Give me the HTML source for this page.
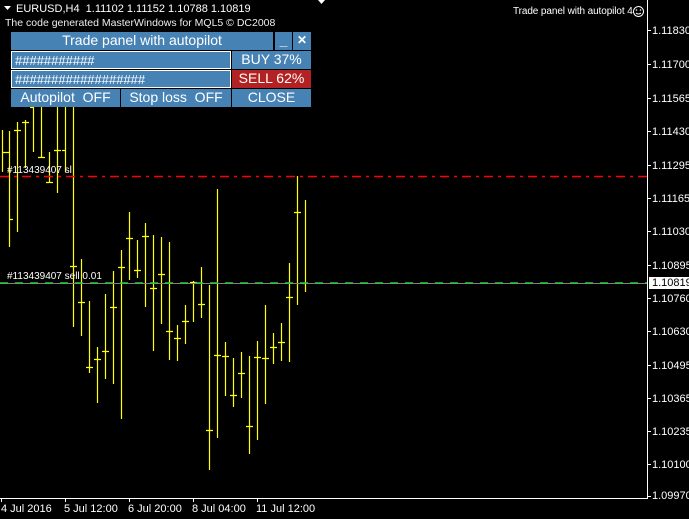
<!DOCTYPE html>
<html><head><meta charset="utf-8"><style>
html,body{margin:0;padding:0;background:#000;width:689px;height:519px;overflow:hidden;font-family:"Liberation Sans",sans-serif}
.abs{position:absolute}
.t{position:absolute;color:#fff;font-size:11px;white-space:nowrap;line-height:12px}
.b{position:absolute;background:#4682B4;color:#fff;font-size:14px;text-align:center;box-sizing:border-box;line-height:17px;white-space:nowrap}
.in{border:1px solid #fff;text-align:left;padding-left:3px;font-size:13px}
</style></head><body>
<svg class="abs" style="left:0;top:0" width="689" height="519">
<g stroke="#ffff00" stroke-width="1.2" fill="none">
<path d="M2.5 130V172M9.5 131V247M17.5 122V232M25.5 120V168M33.5 100V152M41.5 100V158M49.5 152V183M57.5 100V193M65.5 100V172M73.5 100V327M81.5 259V336M89.5 301V373M97.5 347V403M105.5 294V379M113.5 271V384M121.5 250V419M129.5 212V280M137.5 240V278M145.5 223V307M153.5 235V351M161.5 237V324M169.5 242V360M177.5 325V361M185.5 305V344M193.5 281V322M201.5 267V318M209.5 285V470M217.5 189V438M225.5 342V396M233.5 358V407M241.5 352V398M249.5 356V454M257.5 341V440M265.5 305V404M273.5 333V364M281.5 323V361M289.5 263V362M297.5 176V305M305.5 200V292"/>
<path d="M3 152.5H6M6 152.5H9M10 219.5H13M14 130.5H17M18 130.5H21M22 122.5H25M26 122.5H29M30 107.5H33M38 157.5H41M42 157.5H45M46 182.5H49M50 182.5H53M54 150.5H57M58 150.5H61M62 150.5H65M70 266.5H73M74 266.5H77M78 302.5H81M82 302.5H85M86 367.5H89M90 367.5H93M94 359.5H97M98 359.5H101M102 351.5H105M106 351.5H109M110 307.5H113M114 307.5H117M118 267.5H121M122 267.5H125M126 238.5H129M130 238.5H133M134 270.5H137M138 270.5H141M142 236.5H145M146 236.5H149M150 288.5H153M154 288.5H157M158 274.5H161M162 274.5H165M166 331.5H169M170 331.5H173M174 338.5H177M178 338.5H181M182 321.5H185M186 321.5H189M190 282.5H193M194 282.5H197M198 304.5H201M202 304.5H205M206 430.5H209M210 430.5H213M214 355.5H217M218 355.5H221M222 356.5H225M226 356.5H229M230 395.5H233M234 395.5H237M238 373.5H241M242 373.5H245M246 426.5H249M250 426.5H253M254 357.5H257M258 357.5H261M262 358.5H265M266 358.5H269M270 347.5H273M274 347.5H277M278 342.5H281M282 342.5H285M286 297.5H289M290 297.5H293M294 212.5H297M298 212.5H301M302 283.5H305"/>
</g>
<line x1="0" y1="176.5" x2="647" y2="176.5" stroke="#ff0000" stroke-width="1.5" stroke-dasharray="9,5,3,5"/>
<line x1="0" y1="283.5" x2="647" y2="283.5" stroke="#808080" stroke-width="1"/>
<line x1="0" y1="283" x2="647" y2="283" stroke="#2ecc40" stroke-width="1.5" stroke-dasharray="8,7"/>
<g stroke="#fff" shape-rendering="crispEdges">
<line x1="647.5" y1="0" x2="647.5" y2="499"/>
<line x1="0" y1="498.5" x2="648" y2="498.5"/>
<path d="M648 30.5h3M648 64.5h3M648 98.5h3M648 131.5h3M648 165.5h3M648 198.5h3M648 231.5h3M648 265.5h3M648 298.5h3M648 331.5h3M648 365.5h3M648 398.5h3M648 431.5h3M648 464.5h3M648 496.5h3M1.5 499v3M65.5 499v3M129.5 499v3M193.5 499v3M257.5 499v3"/>
</g>
<path d="M4 6h7l-3.5 4z" fill="#fff"/>
<path d="M318 0h7l-3.5 4z" fill="#fff"/>
<circle cx="638.5" cy="11.5" r="5" stroke="#fff" fill="none"/>
<circle cx="636.5" cy="10" r="0.8" fill="#fff"/><circle cx="640.5" cy="10" r="0.8" fill="#fff"/>
<path d="M636 13q2.5 2 5 0" stroke="#fff" fill="none"/>
</svg>
<div class="t" style="left:16px;top:3px">EURUSD,H4&nbsp; 1.11102 1.11152 1.10788 1.10819</div>
<div class="t" style="left:5px;top:17px;color:#eee;font-size:10.5px">The code generated MasterWindows for MQL5 © DC2008</div>
<div class="t" style="left:513px;top:6px;font-size:10px;letter-spacing:-0.1px">Trade panel with autopilot 4</div>
<div class="t" style="left:7px;top:165px;font-size:10px">#113439407 sl</div>
<div class="t" style="left:7px;top:271px;font-size:10px">#113439407 sell 0.01</div>
<div class="t" style="left:652px;top:25px">1.11830</div>
<div class="t" style="left:652px;top:59px">1.11700</div>
<div class="t" style="left:652px;top:93px">1.11565</div>
<div class="t" style="left:652px;top:126px">1.11430</div>
<div class="t" style="left:652px;top:160px">1.11295</div>
<div class="t" style="left:652px;top:193px">1.11165</div>
<div class="t" style="left:652px;top:226px">1.11030</div>
<div class="t" style="left:652px;top:260px">1.10895</div>
<div class="t" style="left:649px;top:277px;background:#fff;color:#000;width:40px;padding-left:3px;box-sizing:border-box">1.10819</div>
<div class="t" style="left:652px;top:293px">1.10760</div>
<div class="t" style="left:652px;top:326px">1.10630</div>
<div class="t" style="left:652px;top:360px">1.10495</div>
<div class="t" style="left:652px;top:393px">1.10365</div>
<div class="t" style="left:652px;top:426px">1.10235</div>
<div class="t" style="left:652px;top:459px">1.10100</div>
<div class="t" style="left:652px;top:490px">1.09970</div>
<div class="t" style="left:1px;top:503px">4 Jul 2016</div>
<div class="t" style="left:64px;top:503px">5 Jul 12:00</div>
<div class="t" style="left:128px;top:503px">6 Jul 20:00</div>
<div class="t" style="left:192px;top:503px">8 Jul 04:00</div>
<div class="t" style="left:256px;top:503px">11 Jul 12:00</div>

<div class="b" style="left:11px;top:32px;width:262px;height:18px;font-size:14px">Trade panel with autopilot</div>
<div class="b" style="left:275px;top:32px;width:17px;height:18px;font-weight:bold">_</div>
<div class="b" style="left:293px;top:32px;width:18px;height:18px;font-size:12px;font-weight:bold">✕</div>
<div class="b in" style="left:11px;top:51px;width:220px;height:18px">###########</div>
<div class="b" style="left:232px;top:51px;width:79px;height:18px">BUY 37%</div>
<div class="b in" style="left:11px;top:70px;width:220px;height:18px">##################</div>
<div class="b" style="left:232px;top:70px;width:79px;height:18px;background:#B22222">SELL 62%</div>
<div class="b" style="left:11px;top:89px;width:109px;height:18px">Autopilot&nbsp; OFF</div>
<div class="b" style="left:121px;top:89px;width:110px;height:18px">Stop loss&nbsp; OFF</div>
<div class="b" style="left:232px;top:89px;width:79px;height:18px">CLOSE</div>
</body></html>
